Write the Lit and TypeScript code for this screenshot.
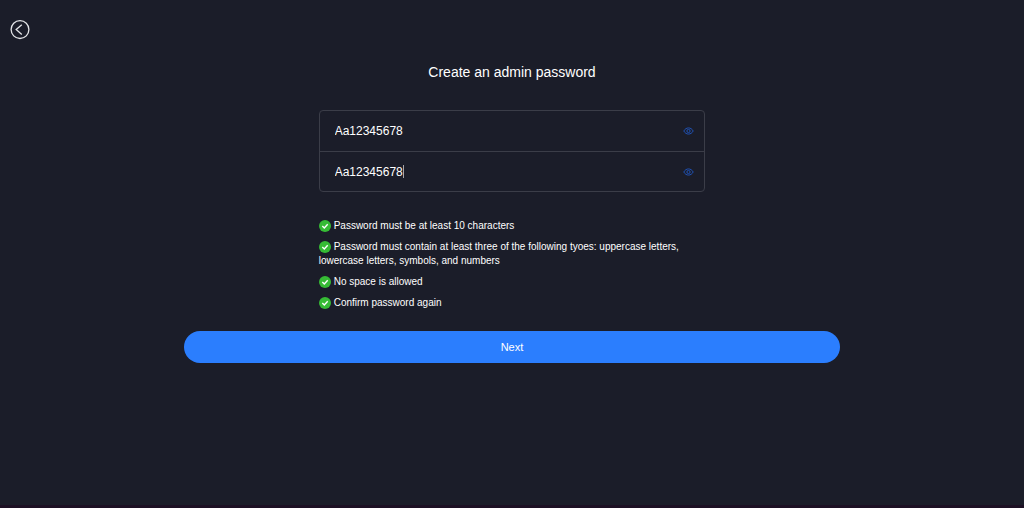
import { LitElement, html, css, svg } from "lit";
import { customElement } from "lit/decorators.js";

const RULES = [
  "Password must be at least 10 characters",
  "Password must contain at least three of the following tyoes: uppercase letters, lowercase letters, symbols, and numbers",
  "No space is allowed",
  "Confirm password again",
];

@customElement("password-field")
class PasswordField extends LitElement {
  static properties = {
    label: {},
    value: {},
    caret: { type: Boolean },
    shown: { state: true },
  };

  declare label: string;
  declare value: string;
  declare caret: boolean;
  declare shown: boolean;

  constructor() {
    super();
    this.shown = true;
    this.caret = false;
  }

  static styles = css`
    :host {
      display: block;
      box-sizing: border-box;
      height: 40px;
    }
    .row {
      display: flex;
      align-items: center;
      height: 100%;
      padding: 0 10px 0 15px;
      position: relative;
    }
    input {
      flex: 1;
      min-width: 0;
      padding: 0;
      border: 0;
      outline: 0;
      background: none;
      color: #fff;
      font: 12px/16px "Liberation Sans", Arial, sans-serif;
    }
    .caret {
      position: absolute;
      left: 83px;
      width: 1px;
      height: 13px;
      background: #a5a6aa;
    }
    button {
      display: flex;
      padding: 0;
      border: 0;
      background: none;
      color: #2052b4;
      cursor: pointer;
    }
  `;

  render() {
    return html`
      <div class="row">
        <input
          type=${this.shown ? "text" : "password"}
          aria-label=${this.label}
          .value=${this.value}
        />
        ${this.caret ? html`<span class="caret"></span>` : ""}
        <button
          type="button"
          aria-label="Show or hide password"
          @click=${() => (this.shown = !this.shown)}
        >
          <svg width="11" height="10" viewBox="0 0 11 10" fill="none" stroke="currentColor">
            <path d="M.8 5C3 .9 8 .9 10.2 5C8 9.1 3 9.1 .8 5Z" />
            <circle cx="5.5" cy="5" r="1.6" />
          </svg>
        </button>
      </div>
    `;
  }
}

@customElement("app-root")
class AppRoot extends LitElement {
  static styles = css`
    :host {
      display: flex;
      flex-direction: column;
      box-sizing: border-box;
      min-height: 100vh;
      padding-top: 20px;
      background: #1b1d29;
      border-bottom: 3px solid #1d1024;
      color: #fff;
      font-family: "Liberation Sans", Arial, sans-serif;
    }
    .back {
      display: flex;
      align-self: flex-start;
      margin-left: 10px;
      padding: 0;
      border: 0;
      background: none;
      color: #e4e5e8;
      cursor: pointer;
    }
    form {
      display: flex;
      flex-direction: column;
      width: 64%;
      margin: 24px auto 0;
    }
    .column {
      width: 59%;
      margin: 0 auto;
    }
    h1 {
      margin: 0 0 30px;
      font-size: 14px;
      line-height: 16px;
      font-weight: 400;
      text-align: center;
    }
    .fields {
      border: 1px solid #3b3d48;
      border-radius: 4px;
    }
    .fields password-field + password-field {
      border-top: 1px solid #3b3d48;
    }
    ul {
      display: flex;
      flex-direction: column;
      gap: 7px;
      margin: 27px 0 21px;
      padding: 0;
      list-style: none;
      font-size: 10px;
      line-height: 14px;
    }
    .tick {
      width: 12px;
      height: 12px;
      margin-right: 3px;
      vertical-align: -3px;
    }
    .next {
      height: 32px;
      border: 0;
      border-radius: 16px;
      background: #2b7efe;
      color: #fff;
      font: 11px/16px "Liberation Sans", Arial, sans-serif;
      cursor: pointer;
    }
  `;

  private tick() {
    return html`<svg class="tick" viewBox="0 0 12 12" aria-hidden="true">
      ${svg`<circle cx="6" cy="6" r="6" fill="#36bb35" />
      <path d="M3.3 6.1L5.3 8L8.7 4.3" fill="none" stroke="#fff" stroke-width="1.4" />`}
    </svg>`;
  }

  render() {
    return html`
      <button class="back" type="button" aria-label="Back">
        <svg width="20" height="20" viewBox="0 0 20 20" fill="none" stroke="currentColor" stroke-width="1.3">
          <circle cx="10" cy="9.6" r="8.9" />
          <path d="M11.8 4.8L6.2 9.6L11.8 14.4" />
        </svg>
      </button>
      <form @submit=${(e: Event) => e.preventDefault()}>
        <div class="column">
          <h1>Create an admin password</h1>
          <div class="fields">
            <password-field label="Password" value="Aa12345678"></password-field>
            <password-field label="Confirm password" value="Aa12345678" caret></password-field>
          </div>
          <ul>
            ${RULES.map((rule) => html`<li>${this.tick()}${rule}</li>`)}
          </ul>
        </div>
        <button class="next" type="submit">Next</button>
      </form>
    `;
  }
}
